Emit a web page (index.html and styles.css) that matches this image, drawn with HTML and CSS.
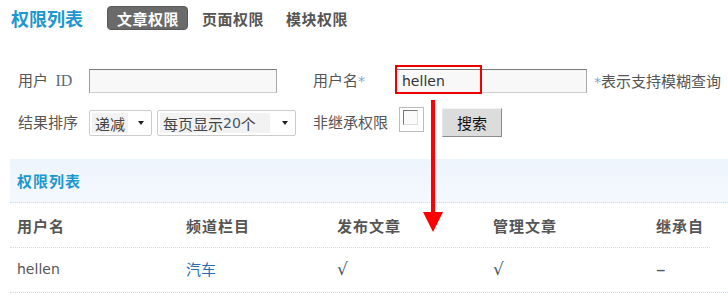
FILE: index.html
```html
<!DOCTYPE html>
<html lang="zh-CN">
<head>
<meta charset="utf-8">
<title>权限列表</title>
<link rel="stylesheet" href="styles.css">
</head>
<body>
<div class="page">
  <div class="topbar">
    <span class="title">权限列表</span>
    <nav class="tabs">
      <span class="tab active">文章权限</span>
      <span class="tab">页面权限</span>
      <span class="tab">模块权限</span>
    </nav>
  </div>

  <form class="filter">
    <div class="row row-one">
      <label class="lbl">用户 <span class="latin-serif">ID</span></label>
      <div class="cell"><input class="txt txt-id" type="text" value=""></div>
      <label class="lbl">用户名<span class="star">*</span></label>
      <div class="cell cell-flex">
        <input class="txt txt-name" type="text" value="hellen">
        <span class="hint"><span class="star">*</span>表示支持模糊查询</span>
      </div>
    </div>
    <div class="row row-two">
      <label class="lbl">结果排序</label>
      <div class="cell cell-flex">
        <div class="sel sel-order"><span class="sel-text">递减</span><span class="caret"></span></div>
        <div class="sel sel-page"><span class="sel-text sel-text-wide">每页显示<span class="latin">20</span>个</span><span class="caret"></span></div>
      </div>
      <label class="lbl">非继承权限</label>
      <div class="cell cell-flex">
        <span class="chk"><span class="chk-inner"></span></span>
        <button class="btn" type="button">搜索</button>
      </div>
    </div>
  </form>

  <section class="list">
    <div class="band">权限列表</div>
    <div class="grid head">
      <span>用户名</span><span>频道栏目</span><span>发布文章</span><span>管理文章</span><span>继承自</span>
    </div>
    <div class="grid data">
      <span class="latin">hellen</span><span class="link">汽车</span><span class="mark">√</span><span class="mark">√</span><span class="dash">–</span>
    </div>
  </section>

  <div class="note-box"></div>
  <svg class="note-arrow" width="22" height="134" viewBox="0 0 22 134">
    <rect x="9" y="0" width="4" height="114" fill="#ff0000"/>
    <polygon points="1,112 21,112 11,132" fill="#ff0000"/>
  </svg>
</div>
</body>
</html>
```

FILE: styles.css
```css
html, body {
  margin: 0;
  padding: 0;
  background: #ffffff;
}

body {
  font-family: "Noto Sans CJK SC", "DejaVu Sans", sans-serif;
  color: #555555;
  font-size: 15px;
}

.page {
  position: relative;
  width: 728px;
  height: 296px;
  overflow: hidden;
}

.latin {
  font-family: "DejaVu Sans", "Noto Sans CJK SC", sans-serif;
  font-size: 14px;
}

.latin-serif {
  font-family: "Liberation Serif", serif;
  font-size: 16px;
  color: #5a6a80;
  margin-left: 4px;
}

/* top bar */
.topbar {
  display: flex;
  align-items: center;
  height: 36px;
  padding-left: 11px;
}

.title {
  font-size: 18px;
  font-weight: 700;
  color: #1b98cf;
  line-height: 24px;
}

.tabs {
  display: flex;
  gap: 4px;
  margin-left: 24px;
}

.tab {
  display: flex;
  align-items: center;
  height: 24px;
  padding: 0 8px 0 10px;
  font-size: 15px;
  font-weight: 700;
  letter-spacing: 0.5px;
  color: #555555;
  box-sizing: border-box;
  border-radius: 4px;
}

.tab.active {
  background: #6a6a6a;
  border: 1px solid #585858;
  color: #ffffff;
  padding: 0 8px 0 9px;
}

/* filter form */
.filter {
  margin: 32px 0 0 18px;
}

.row {
  display: grid;
  grid-template-columns: 71px 224px 83px auto;
}

.row-one {
  height: 24px;
  align-items: center;
}

.row-two {
  margin-top: 15px;
  height: 30px;
  align-items: start;
}

.row-two .lbl {
  line-height: 30px;
}

.lbl {
  font-size: 15px;
  color: #555555;
  white-space: nowrap;
  line-height: 24px;
}

.star {
  color: #7fa8d4;
  font-family: "DejaVu Sans", sans-serif;
  font-size: 14px;
}

.cell-flex {
  display: flex;
  align-items: center;
}

.row-two .cell-flex {
  align-items: flex-start;
}

.txt {
  display: block;
  box-sizing: border-box;
  height: 24px;
  margin: 0;
  padding: 0 5px;
  border: 1px solid;
  border-color: #7a7a7a #a8a8a8 #cccccc #9a9a9a;
  background: #f8f8f8;
  font-family: "DejaVu Sans", sans-serif;
  font-size: 14px;
  color: #333333;
  outline: none;
}

.txt-id {
  width: 188px;
}

.txt-name {
  width: 191px;
}

.hint {
  margin-left: 7px;
  font-size: 15px;
  color: #555555;
  white-space: nowrap;
}

/* selects */
.sel {
  display: flex;
  align-items: center;
  box-sizing: border-box;
  height: 26px;
  margin-top: 3px;
  border: 1px solid #cccccc;
  border-radius: 2px;
  background: #ffffff;
  padding-left: 2px;
}

.sel-order {
  width: 63px;
}

.sel-page {
  width: 139px;
  margin-left: 5px;
}

.sel-text {
  display: flex;
  align-items: center;
  height: 20px;
  padding: 0 3px;
  background: #f2f2f2;
  font-size: 15px;
  color: #444444;
  white-space: nowrap;
}

.sel-text .latin {
  color: #3f5670;
}

.sel-order .sel-text {
  width: 30px;
}

.sel-text-wide {
  width: 104px;
}

.caret {
  width: 0;
  height: 0;
  margin-left: auto;
  margin-right: 7px;
  border-left: 3.5px solid transparent;
  border-right: 3.5px solid transparent;
  border-top: 4px solid #222222;
}

/* checkbox + button */
.chk {
  display: flex;
  align-items: flex-start;
  box-sizing: border-box;
  width: 25px;
  height: 25px;
  margin-left: 3px;
  padding: 2px 0 0 3px;
  border: 1px solid #bcbcbc;
  background: #ffffff;
}

.chk-inner {
  display: block;
  box-sizing: border-box;
  width: 15px;
  height: 15px;
  border: 1px solid;
  border-color: #777777 #dddddd #dddddd #777777;
  background: #fbfbfb;
}

.btn {
  box-sizing: border-box;
  width: 60px;
  height: 29px;
  margin: 1px 0 0 18px;
  padding: 0;
  border: 1px solid;
  border-color: #f2f2f2 #8a8a8a #8a8a8a #e6e6e6;
  background: #dcdcdc;
  font-family: "Noto Sans CJK SC", sans-serif;
  font-size: 15px;
  color: #111111;
}

/* list */
.list {
  margin: 22px 0 0 10px;
}

.band {
  box-sizing: border-box;
  height: 44px;
  padding-left: 7px;
  line-height: 43px;
  background: linear-gradient(#edf4fc, #f5f9fe);
  border-bottom: 1px dotted #c6dcef;
  font-size: 15px;
  font-weight: 700;
  letter-spacing: 1px;
  color: #1b98cf;
}

.grid {
  display: grid;
  grid-template-columns: 169px 151px 156px 163px 1fr;
  box-sizing: border-box;
  height: 45px;
  align-items: center;
  border-bottom: 1px dotted #c6dcef;
}

.grid > span {
  padding-left: 7px;
  white-space: nowrap;
}

.head {
  width: 700px;
  font-size: 15px;
  font-weight: 700;
  letter-spacing: 1px;
  color: #555555;
}

.data {
  font-size: 15px;
  color: #555555;
}

.data > span {
  line-height: 20px;
  margin-top: -2px;
}

.link {
  color: #2a6db0;
}

.mark {
  font-family: "DejaVu Sans", sans-serif;
  font-size: 17px;
  color: #4a5566;
}

.dash {
  font-family: "DejaVu Sans", sans-serif;
  font-size: 19px;
  color: #4a5566;
}

/* red annotation overlay */
.note-box {
  position: absolute;
  left: 395px;
  top: 65px;
  width: 87px;
  height: 29px;
  box-sizing: border-box;
  border: 2px solid #ee0000;
}

.note-arrow {
  position: absolute;
  left: 422px;
  top: 100px;
}
```
